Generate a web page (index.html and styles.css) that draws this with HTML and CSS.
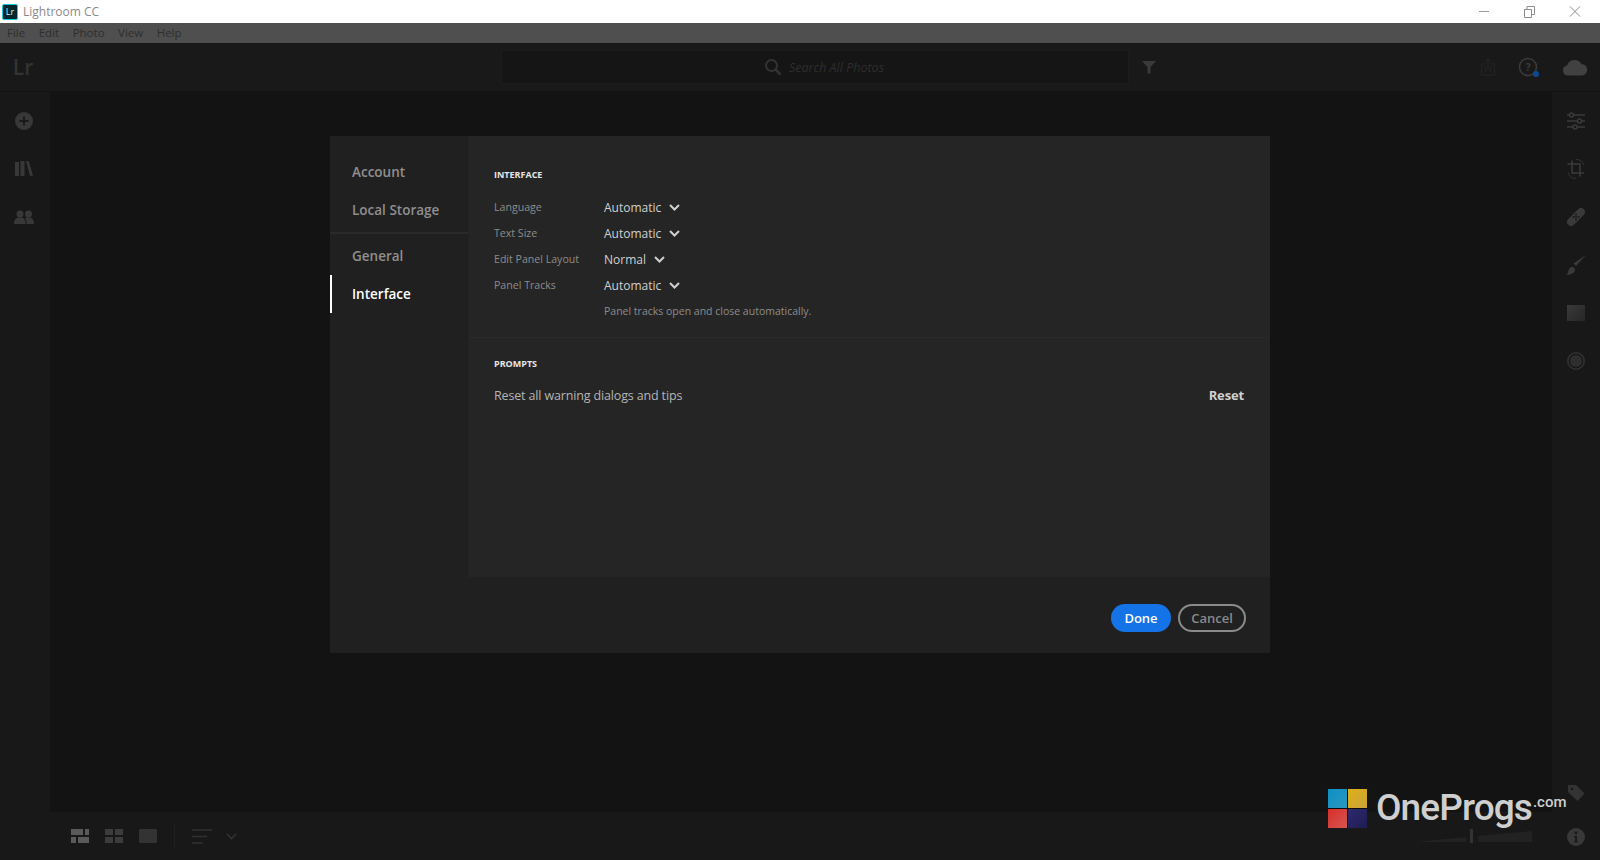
FILE: index.html
```html
<!DOCTYPE html>
<html lang="en">
<head>
    <meta charset="UTF-8">
    <title>Lightroom CC</title>
    <link rel="stylesheet" href="styles.css">
</head>
<body>
    <div class="titlebar">
        <div class="app-badge">Lr</div>
        <span class="app-name">Lightroom CC</span>
        <div class="window-buttons">
            <svg width="14" height="14" viewBox="0 0 14 14"><path d="M3 6.500h10" stroke="#9a9a9a" fill="none"/></svg>
            <svg width="14" height="14" viewBox="0 0 14 14"><path d="M2.500 4.500h7v8h-7zM5 4.500v-3h7.500v8h-3" stroke="#8c8c8c" fill="none"/></svg>
            <svg width="14" height="14" viewBox="0 0 14 14"><path d="M2 1.500l10 10M12 1.500l-10 10" stroke="#8c8c8c" fill="none"/></svg>
        </div>
    </div>

    <div class="menubar">
        <span>File</span><span>Edit</span><span>Photo</span><span>View</span><span>Help</span>
    </div>

    <div class="topbar">
        <div class="lr-logo">Lr</div>
        <div class="search-wrap">
            <div class="search-box">
                <svg width="18" height="18" viewBox="0 0 18 18"><circle cx="7.500" cy="7.500" r="5.500" stroke="#333" stroke-width="2" fill="none"/><path d="M11.500 11.500l5 5" stroke="#333" stroke-width="2.500"/></svg>
                <span>Search All Photos</span>
            </div>
            <svg class="filter-icon" width="14" height="14" viewBox="0 0 14 14"><path d="M0 1h14L8.500 7v6.500h-3V7z" fill="#3a3a3a"/></svg>
        </div>
        <div class="top-icons">
            <svg width="16" height="18" viewBox="0 0 16 18"><path d="M1.500 6h4M10.500 6h4v11h-13V6M8 1v10M5.500 3.500L8 1l2.500 2.500M5.500 8v6M10.500 8v6" stroke="#222" stroke-width="1.500" fill="none"/></svg>
            <div class="help-icon">
                <svg width="20" height="20" viewBox="0 0 20 20"><circle cx="10" cy="10" r="8.500" stroke="#3a3a3a" stroke-width="1.600" fill="none"/><text x="10" y="14" text-anchor="middle" font-size="11" font-weight="700" font-family="Open Sans" fill="#3a3a3a">?</text></svg>
                <span class="help-dot"></span>
            </div>
            <svg class="cloud-icon" width="26" height="17" viewBox="0 0 26 17"><path d="M6 16.500a5 5 0 0 1-1-9.900A8 8 0 0 1 19.500 5a5.800 5.800 0 0 1 1 11.500z" fill="#414141"/></svg>
        </div>
    </div>

    <div class="workspace">
        <div class="left-rail">
            <svg width="18" height="18" viewBox="0 0 18 18"><circle cx="9" cy="9" r="9" fill="#383838"/><path d="M9 4.500v9M4.500 9h9" stroke="#191919" stroke-width="2"/></svg>
            <svg width="18" height="16" viewBox="0 0 18 16"><path d="M0 1h4v14H0zM5.500 0h4v15h-4zM11 0l2.500-.5L18 14.500l-3 .5z" fill="#383838"/></svg>
            <svg width="20" height="14" viewBox="0 0 20 14"><circle cx="6" cy="4" r="3.500" fill="#383838"/><circle cx="14.500" cy="4" r="3.500" fill="#383838"/><path d="M0 14c0-5 2-6.500 6-6.500s5.500 1.500 5.500 6.500zM12.500 14c0-3-.5-4.500-1.500-6 1-.4 2-.5 3.500-.5 3.500 0 5.500 1.500 5.500 6.500z" fill="#383838"/></svg>
        </div>

        <div class="center-col">
            <div class="canvas"></div>
            <div class="bottombar">
                <div class="view-icons">
                    <svg width="18" height="14" viewBox="0 0 18 14"><path d="M0 0h12v6H0zM14 0h4v6h-4zM0 8h5v6H0zM7 8h11v6H7z" fill="#5a5a5a"/></svg>
                    <svg width="18" height="14" viewBox="0 0 18 14"><path d="M0 0h8v6H0zM10 0h8v6h-8zM0 8h8v6H0zM10 8h8v6h-8z" fill="#3c3c3c"/></svg>
                    <svg width="18" height="14" viewBox="0 0 18 14"><path d="M0 0h18v14H0z" fill="#333"/></svg>
                </div>
                <div class="bar-sep"></div>
                <svg width="20" height="15" viewBox="0 0 20 15"><path d="M0 1h20M0 7.500h15M0 14h11" stroke="#303030" stroke-width="1.600"/></svg>
                <svg class="sort-chevron" width="11" height="7" viewBox="0 0 11 7"><path d="M1 1l4.500 4.500L10 1" stroke="#333" stroke-width="1.600" fill="none"/></svg>
                <div class="size-slider">
                    <svg width="116" height="14" viewBox="0 0 116 14"><path d="M0 13L50 8v5zM62 7L116 2v11H62z" fill="#222"/><path d="M54 0h3v14h-3z" fill="#333"/></svg>
                </div>
            </div>
        </div>

        <div class="right-rail">
            <div class="right-tools">
                <svg width="18" height="18" viewBox="0 0 18 18"><g stroke="#3a3a3a" stroke-width="1.500" fill="#181818"><path d="M0 3h18M0 9h18M0 15h18"/><circle cx="4.500" cy="3" r="2"/><circle cx="12.500" cy="9" r="2"/><circle cx="8" cy="15" r="2"/></g></svg>
                <svg width="20" height="22" viewBox="0 0 20 22"><path d="M6 2.500V15h12M1.500 6H14v12.500" stroke="#3a3a3a" stroke-width="1.600" fill="none"/><path d="M10 1.500a8 8 0 0 1 8 6M10 20.500a8 8 0 0 1-8-6" stroke="#333" fill="none"/></svg>
                <svg width="20" height="20" viewBox="0 0 20 20"><rect x="-1" y="6" width="22" height="8" rx="4" fill="#3a3a3a" transform="rotate(-45 10 10)"/><circle cx="10" cy="10" r="1" fill="#181818"/><circle cx="7.500" cy="10" r="1" fill="#181818"/><circle cx="12.500" cy="10" r="1" fill="#181818"/><circle cx="10" cy="7.500" r="1" fill="#181818"/><circle cx="10" cy="12.500" r="1" fill="#181818"/></svg>
                <svg width="22" height="22" viewBox="0 0 22 22"><path d="M21 1L11 12 8.500 9.500z" fill="#3a3a3a"/><path d="M1 21c3-1 1.500-5.500 4.500-7.500 2-1 4.500 0 4.500 2.500 0 3-5 5-9 5z" fill="#3a3a3a"/></svg>
                <div class="tool-square"></div>
                <svg width="18" height="18" viewBox="0 0 18 18"><circle cx="9" cy="9" r="8.200" stroke="#333" stroke-width="1.500" fill="none"/><circle cx="9" cy="9" r="6" fill="#2e2e2e"/></svg>
            </div>
            <div class="right-tools-bottom">
                <svg width="18" height="18" viewBox="0 0 18 18"><path d="M1 1h8l8.500 8.500-7 7.500L1 8z" fill="#333"/><circle cx="5" cy="5" r="1.300" fill="#181818"/></svg>
                <svg width="18" height="18" viewBox="0 0 18 18"><circle cx="9" cy="9" r="9" fill="#383838"/><circle cx="9" cy="5" r="1.400" fill="#181818"/><path d="M7 8h3v5h1.200v1.300H7V13h1.200V9.300H7z" fill="#181818"/></svg>
            </div>
        </div>
    </div>

    <div class="modal-layer">
        <div class="dialog">
            <div class="dialog-body">
                <nav class="side-nav">
                    <div class="nav-group first">
                        <div class="nav-item">Account</div>
                        <div class="nav-item">Local Storage</div>
                    </div>
                    <div class="nav-group">
                        <div class="nav-item">General</div>
                        <div class="nav-item active">Interface</div>
                    </div>
                </nav>
                <div class="settings">
                    <section class="section interface">
                        <h2>INTERFACE</h2>
                        <div class="setting-row"><label>Language</label><span class="select">Automatic<svg width="11" height="7" viewBox="0 0 11 7"><path d="M1 1l4.500 4.500L10 1" stroke="#d0d0d0" stroke-width="2" fill="none"/></svg></span></div>
                        <div class="setting-row"><label>Text Size</label><span class="select">Automatic<svg width="11" height="7" viewBox="0 0 11 7"><path d="M1 1l4.500 4.500L10 1" stroke="#d0d0d0" stroke-width="2" fill="none"/></svg></span></div>
                        <div class="setting-row"><label>Edit Panel Layout</label><span class="select">Normal<svg width="11" height="7" viewBox="0 0 11 7"><path d="M1 1l4.500 4.500L10 1" stroke="#d0d0d0" stroke-width="2" fill="none"/></svg></span></div>
                        <div class="setting-row"><label>Panel Tracks</label><span class="select">Automatic<svg width="11" height="7" viewBox="0 0 11 7"><path d="M1 1l4.500 4.500L10 1" stroke="#d0d0d0" stroke-width="2" fill="none"/></svg></span></div>
                        <p class="hint">Panel tracks open and close automatically.</p>
                    </section>
                    <section class="section prompts">
                        <h2>PROMPTS</h2>
                        <div class="reset-row">
                            <span>Reset all warning dialogs and tips</span>
                            <button class="reset-btn">Reset</button>
                        </div>
                    </section>
                </div>
            </div>
            <div class="dialog-footer">
                <button class="btn primary">Done</button>
                <button class="btn secondary">Cancel</button>
            </div>
        </div>
    </div>

    <div class="watermark">
        <div class="wm-squares">
            <span class="wm-blue"></span><span class="wm-yellow"></span>
            <span class="wm-red"></span><span class="wm-navy"></span>
        </div>
        <span class="wm-name">OneProgs</span>
        <span class="wm-com">.com</span>
    </div>
</body>
</html>
```

FILE: styles.css
```css
html, body {
    height: 100%;
}

body {
    margin: 0;
    height: 860px;
    overflow: hidden;
    display: flex;
    flex-direction: column;
    background-color: #131313;
    font-family: "Open Sans", sans-serif;
    color: #ccc;
}

/* Window chrome */
.titlebar {
    height: 23px;
    background-color: #fff;
    display: flex;
    align-items: center;
    padding-left: 2px;
}

.app-badge {
    width: 16px;
    height: 16px;
    box-sizing: border-box;
    background-color: #04272c;
    border: 1px solid #1fc4de;
    border-radius: 2px;
    color: #d8f4f8;
    font-size: 9px;
    line-height: 14px;
    text-align: center;
}

.app-name {
    margin-left: 5px;
    font-size: 12px;
    color: #8a8a8a;
}

.window-buttons {
    margin-left: auto;
    display: flex;
    gap: 32px;
    padding-right: 18px;
}

.menubar {
    height: 19px;
    padding: 0 0 1px 7px;
    background-color: #4f4f4f;
    display: flex;
    gap: 13.500px;
    align-items: center;
    font-size: 11.500px;
    color: #2e2e2e;
}

.topbar {
    height: 48px;
    background-color: #191919;
    display: flex;
    align-items: center;
    position: relative;
}

.lr-logo {
    width: 46px;
    text-align: center;
    font-size: 21px;
    font-weight: 600;
    color: #333;
}

.search-wrap {
    margin-left: 455px;
    display: flex;
    align-items: center;
}

.search-box {
    width: 628px;
    height: 34px;
    background-color: #151515;
    border: 1px solid #1c1c1c;
    display: flex;
    align-items: center;
    justify-content: center;
    gap: 7px;
    box-sizing: border-box;
    padding-left: 18px;
}

.search-box span {
    font-size: 12.500px;
    font-style: italic;
    color: #2e2e2e;
}

.filter-icon {
    margin-left: 13px;
}

.top-icons {
    margin-left: auto;
    display: flex;
    align-items: center;
    gap: 22px;
    padding-right: 12px;
}

.cloud-icon {
    margin-left: 2px;
}

.help-icon {
    position: relative;
    display: flex;
}

.help-dot {
    position: absolute;
    right: -1px;
    bottom: 0;
    width: 6px;
    height: 6px;
    border-radius: 50%;
    background-color: #0b4a92;
}

/* Panels behind the dialog */
.workspace {
    flex: 1;
    display: flex;
    min-height: 0;
    padding-top: 1px;
}

.left-rail {
    width: 50px;
    background-color: #181818;
    display: grid;
    grid-auto-rows: 48px;
    align-content: start;
    align-items: center;
    justify-items: center;
    padding: 5px 2px 0 0;
    box-sizing: border-box;
}

.center-col {
    flex: 1;
    display: flex;
    flex-direction: column;
}

.canvas {
    flex: 1;
}

.bottombar {
    height: 48px;
    background-color: #181818;
    display: flex;
    align-items: center;
    padding-left: 21px;
}

.view-icons {
    display: flex;
    gap: 16px;
}

.bar-sep {
    width: 1px;
    height: 24px;
    background-color: #1f1f1f;
    margin: 0 17px;
}

.sort-chevron {
    margin-left: 14px;
}

.size-slider {
    margin-left: auto;
    padding-right: 20px;
    display: flex;
}

.right-rail {
    width: 48px;
    background-color: #181818;
    display: flex;
    flex-direction: column;
    justify-content: space-between;
    align-items: center;
    padding: 5px 0 14px;
    box-sizing: border-box;
}

.right-tools {
    display: grid;
    grid-auto-rows: 48px;
    align-items: center;
    justify-items: center;
}

.right-tools-bottom {
    display: flex;
    flex-direction: column;
    align-items: center;
    gap: 26px;
}

.tool-square {
    width: 18px;
    height: 16px;
    background: linear-gradient(135deg, #3a3a3a, #262626);
}

/* Dialog */
.modal-layer {
    position: absolute;
    top: 136px;
    left: 0;
    right: 0;
    display: flex;
    justify-content: center;
}

.dialog {
    width: 940px;
    height: 517px;
    background-color: #202020;
    display: flex;
    flex-direction: column;
}

.dialog-body {
    height: 441px;
    display: flex;
}

.side-nav {
    width: 138px;
    border-right: 1px solid #232323;
    font-size: 13.500px;
    font-weight: 600;
    color: #8f8f8f;
}

.nav-group {
    padding-top: 3px;
}

.nav-group.first {
    padding-top: 17px;
    padding-bottom: 3px;
    border-bottom: 2px solid #2a2a2a;
}

.nav-item {
    height: 38px;
    line-height: 38px;
    padding-left: 22px;
}

.nav-item.active {
    color: #fff;
    border-left: 2px solid #fff;
    padding-left: 20px;
}

.settings {
    flex: 1;
    background-color: #252525;
    display: flex;
    flex-direction: column;
}

.section {
    padding: 0 26px 0 25px;
}

.section h2 {
    margin: 0;
    font-size: 9px;
    font-weight: 700;
    color: #e6e6e6;
}

.interface {
    height: 202px;
    border-bottom: 1px solid #2a2a2a;
    padding-top: 32px;
    box-sizing: border-box;
}

.interface h2 {
    margin-bottom: 13px;
}

.setting-row {
    height: 26px;
    display: flex;
    align-items: center;
    font-size: 10.600px;
    color: #8c8c8c;
}

.setting-row label {
    width: 110px;
}

.select {
    display: flex;
    align-items: center;
    gap: 8px;
    font-size: 12px;
    color: #d0d0d0;
}

.hint {
    margin: 6px 0 0 110px;
    font-size: 10.500px;
    color: #8c8c8c;
}

.prompts {
    padding-top: 19px;
}

.reset-row {
    display: flex;
    justify-content: space-between;
    align-items: center;
    margin-top: 16px;
    font-size: 12.500px;
    letter-spacing: -0.15px;
    color: #b4b4b4;
}

.reset-btn {
    background: none;
    border: none;
    padding: 0;
    font-family: inherit;
    font-size: 13px;
    font-weight: 700;
    letter-spacing: -0.15px;
    color: #d0d0d0;
}

.dialog-footer {
    flex: 1;
    display: flex;
    justify-content: flex-end;
    align-items: center;
    gap: 7px;
    padding: 6px 24px 0 0;
}

.btn {
    height: 28px;
    border-radius: 14px;
    font-family: inherit;
    font-size: 13px;
    font-weight: 600;
    box-sizing: border-box;
}

.btn.primary {
    width: 60px;
    background-color: #1473e6;
    border: none;
    color: #fff;
}

.btn.secondary {
    width: 68px;
    background: none;
    border: 2px solid #8a8a8a;
    color: #8a8a8a;
}

/* Site watermark */
.watermark {
    position: absolute;
    left: 1328px;
    top: 789px;
    display: flex;
    align-items: flex-start;
}

.wm-squares {
    width: 39px;
    height: 39px;
    display: grid;
    grid-template-columns: 1fr 1fr;
    gap: 1px;
    background-color: #0b0b0b;
}

.wm-blue { background: linear-gradient(135deg, #0f8fc4, #2a98c0); }
.wm-yellow { background: linear-gradient(135deg, #dfae16, #c9a43a); }
.wm-red { background: linear-gradient(135deg, #d72f2b, #d65650); }
.wm-navy { background: linear-gradient(135deg, #2c2a70, #201c50); }

.wm-name {
    margin-left: 9px;
    font-family: Roboto, sans-serif;
    font-weight: 500;
    font-size: 37px;
    line-height: 38px;
    color: #cfcfcf;
    letter-spacing: -0.9px;
}

.wm-com {
    margin-left: 1px;
    font-family: Roboto, sans-serif;
    font-weight: 500;
    font-size: 15px;
    line-height: 26px;
    color: #cfcfcf;
}
```
